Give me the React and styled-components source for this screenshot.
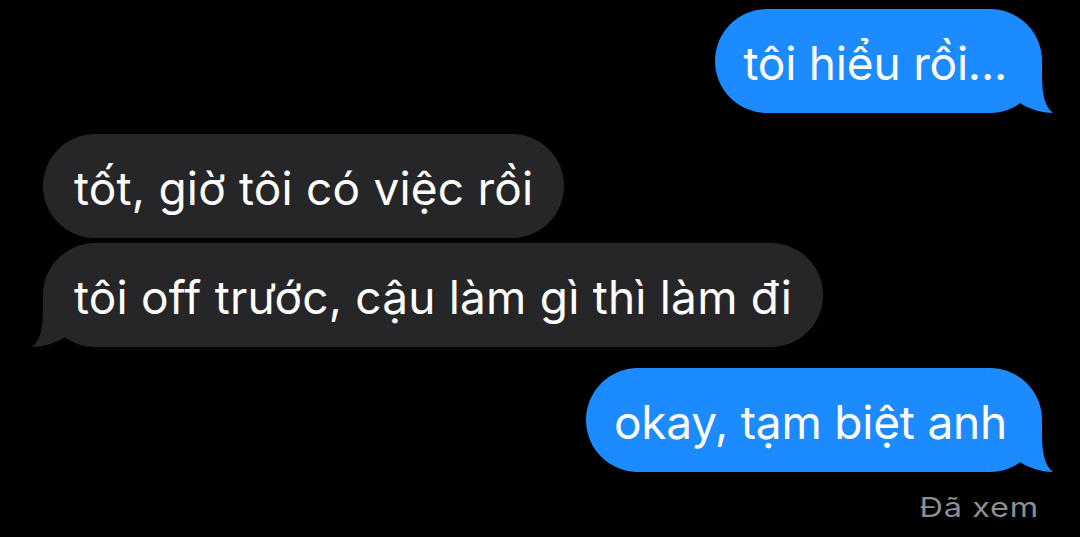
import React from "react";
import styled, { createGlobalStyle } from "styled-components";

const Global = createGlobalStyle`
  html, body { margin: 0; padding: 0; background: #000; }
  body { font-family: Inter, "Noto Sans", "Liberation Sans", sans-serif; }
`;

const Thread = styled.div`
  width: 1080px;
  height: 537px;
  box-sizing: border-box;
  padding: 9px 38px 0 43px;
  display: flex;
  flex-direction: column;
  background: #000;
  overflow: hidden;
`;

const Row = styled.div`
  display: flex;
  justify-content: ${(p) => (p.$sent ? "flex-end" : "flex-start")};
  margin-top: ${(p) => p.$gap || 0}px;
`;

const Bubble = styled.div`
  position: relative;
  height: 104px;
  box-sizing: border-box;
  padding: ${(p) => (p.$sent ? "4px 35px 0 28px" : "4px 31px 0 31px")};
  border-radius: 52px;
  background: ${(p) => (p.$sent ? "#1b8bff" : "#262628")};
  color: #fff;
  font-size: 46px;
  line-height: 100px;
  letter-spacing: ${(p) => (p.$sent ? "-0.2px" : "0.2px")};
  white-space: nowrap;
`;

const Tail = styled.svg`
  position: absolute;
  bottom: 0;
  width: 35px;
  height: 50px;
  ${(p) =>
    p.$sent
      ? "right: -11px;"
      : "left: -11px; transform: scaleX(-1);"}
`;

const Receipt = styled.div`
  margin-top: 19px;
  align-self: flex-end;
  padding-right: 3px;
  color: #8e8e93;
  font-size: 27px;
  line-height: 34px;
  letter-spacing: 0.6px;
  transform: scaleX(1.2);
  transform-origin: right center;
`;

function Message({ sent, tail, gap, children }) {
  return (
    <Row $sent={sent} $gap={gap}>
      <Bubble $sent={sent}>
        {children}
        {tail && (
          <Tail $sent={sent} viewBox="0 0 35 50">
            <path
              d="M24 0 L24 12 C24 32 27 44 35 50 C27 50 12 47 2 40 L2 0 Z"
              fill={sent ? "#1b8bff" : "#262628"}
            />
          </Tail>
        )}
      </Bubble>
    </Row>
  );
}

export default function App() {
  return (
    <>
      <Global />
      <Thread>
        <Message sent tail>tôi hiểu rồi...</Message>
        <Message gap={21}>tốt, giờ tôi có việc rồi</Message>
        <Message gap={5} tail>tôi off trước, cậu làm gì thì làm đi</Message>
        <Message sent tail gap={21}>okay, tạm biệt anh</Message>
        <Receipt>Đã xem</Receipt>
      </Thread>
    </>
  );
}
